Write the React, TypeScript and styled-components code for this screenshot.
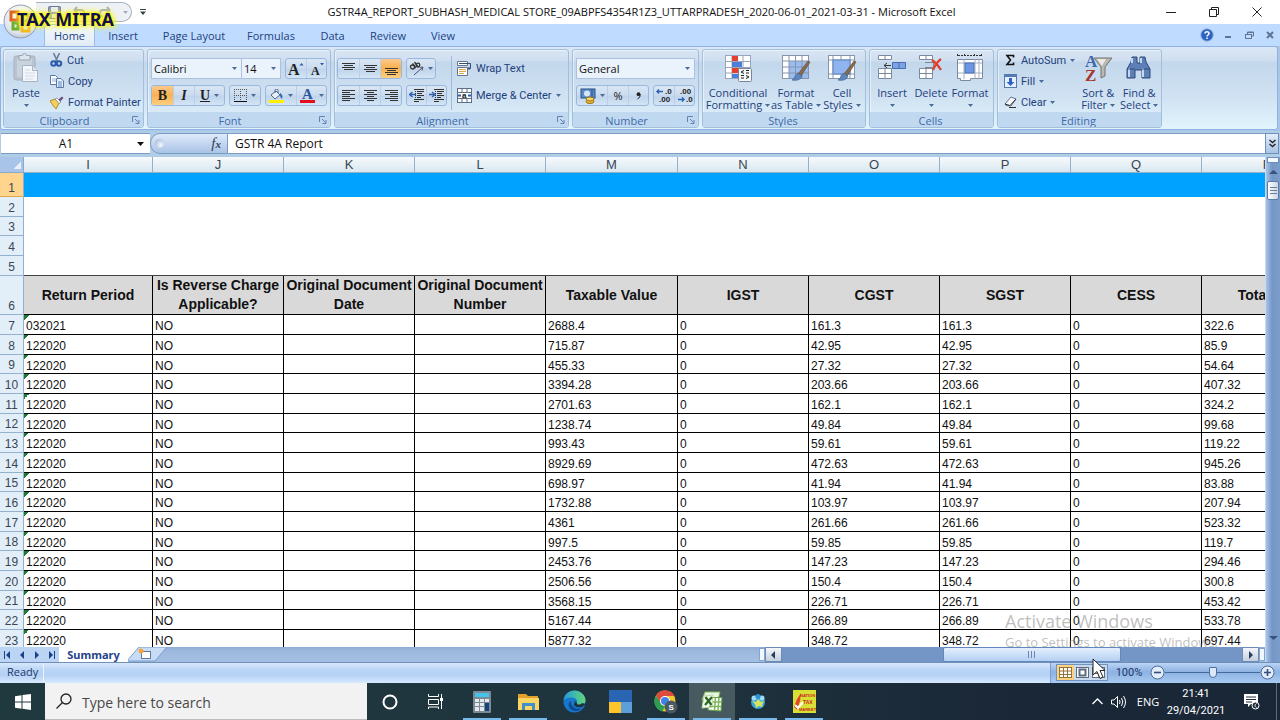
import React from "react";
import styled, { createGlobalStyle } from "styled-components";

const ui = `"Open Sans", "Noto Sans", sans-serif`;
const compact = `Roboto, "Open Sans", sans-serif`;
const sheetFont = `"Liberation Sans", Arial, sans-serif`;

const GlobalStyle = createGlobalStyle`
  * { box-sizing: border-box; }
  body { margin: 0; overflow: hidden; background: #fff; font-family: ${ui}; }
  button, input, select { font: inherit; color: inherit; margin: 0; padding: 0; border: 0; background: none; border-radius: 0; }
  svg { display: block; flex: none; }
`;

const Desktop = styled.div`
  position: relative;
  display: flex;
  flex-direction: column;
  height: 100vh;
  overflow: hidden;
  font-size: 11px;
  color: #1e3f7c;
`;

/* ---------- title bar ---------- */
const TitleBar = styled.header`
  display: flex;
  align-items: center;
  flex: none;
  height: 24px;
  background: #fff;
  color: #111;
`;
const QuickAccess = styled.div`
  display: flex;
  align-items: center;
  gap: 12px;
  width: 96px;
  height: 20px;
  margin-left: 36px;
  padding: 0 8px 0 12px;
  background: #eef1f5;
  border: 1px solid #a9b3c0;
  border-left: 0;
  border-radius: 0 10px 10px 0;
`;
const IconButton = styled.button`
  display: flex;
  align-items: center;
  justify-content: center;
`;
const QuickMore = styled(IconButton)`
  width: 22px;
  height: 20px;
`;
const TitleText = styled.h1`
  flex: 1;
  margin: 0;
  padding-right: 32px;
  text-align: center;
  font-size: 11px;
  font-weight: 400;
  line-height: 24px;
  white-space: nowrap;
`;
const WindowButtons = styled.div`
  display: flex;
  gap: 24px;
  padding-right: 14px;
  button { width: 19px; height: 22px; }
`;
const OfficeButton = styled.button`
  position: absolute;
  left: 3px;
  top: 4px;
  width: 35px;
  height: 35px;
`;
const Brand = styled.div`
  position: absolute;
  left: 15px;
  top: 8px;
  padding: 0 2px;
  font: 700 18px/22px "Noto Sans", sans-serif;
  color: #10104e;
  white-space: nowrap;
  text-shadow: 0 0 2px #ff0, 0 0 3px #ff0, 0 0 4px #fff200, 0 0 6px #fff200, 0 0 8px #fff87a;
`;

/* ---------- ribbon ---------- */
const TabRow = styled.nav`
  display: flex;
  align-items: flex-end;
  flex: none;
  height: 22px;
  padding-left: 44px;
  background: #bfdbff;
`;
const RibbonTab = styled.button<{ $on?: boolean; $w: number }>`
  width: ${(p) => p.$w}px;
  height: 22px;
  line-height: 24px;
  border-radius: 4px 4px 0 0;
  ${(p) => p.$on && "background: linear-gradient(#f2f8ff, #e2ecf6); box-shadow: inset 1px 1px 0 #9cbde3, inset -1px 0 0 #9cbde3;"}
`;
const DocButtons = styled.div`
  display: flex;
  align-items: center;
  gap: 5px;
  height: 22px;
  margin-left: auto;
  padding-right: 2px;
  button { width: 16px; height: 16px; }
`;
const RibbonFrame = styled.div`
  flex: none;
  height: 85px;
  padding-right: 2px;
  background: #a9c6e6;
`;
const Ribbon = styled.div`
  display: flex;
  gap: 3px;
  height: 84px;
  padding: 2px;
  border: 1px solid #8db2e3;
  border-radius: 3px;
  background: linear-gradient(#dbe7f4 0, #cfdef0 14px, #c3d7ec 15px, #d0e2f2 50px, #e2f5fd 83px);
`;
const GroupBox = styled.section<{ $w: number }>`
  display: flex;
  flex-direction: column;
  flex: none;
  width: ${(p) => p.$w}px;
  height: 79px;
  border: 1px solid #a2bfdb;
  border-radius: 3px;
  box-shadow: inset 1px 1px 0 rgba(255, 255, 255, 0.5);
  overflow: hidden;
`;
const GroupBody = styled.div<{ $pad?: string; $gap?: number }>`
  display: flex;
  flex: 1;
  min-height: 0;
  gap: ${(p) => p.$gap ?? 0}px;
  padding: ${(p) => p.$pad ?? "2px 3px 0"};
`;
const GroupLabel = styled.h2`
  display: flex;
  align-items: center;
  flex: none;
  height: 15px;
  margin: 0;
  padding: 1px 2px 0 0;
  background: #c1d9f0;
  color: #3e6aaa;
  font-size: 11px;
  font-weight: 400;
  line-height: 15px;
  span { flex: 1; text-align: center; }
`;
const LaunchButton = styled(IconButton)`
  width: 16px;
  justify-content: flex-end;
`;
const Stack = styled.div<{ $gap: number; $pad?: string }>`
  display: flex;
  flex-direction: column;
  gap: ${(p) => p.$gap}px;
  padding: ${(p) => p.$pad ?? "0"};
`;
const Line = styled.div<{ $gap?: number }>`
  display: flex;
  gap: ${(p) => p.$gap ?? 4}px;
`;
const BigButton = styled.button<{ $w: number }>`
  display: flex;
  flex-direction: column;
  align-items: center;
  flex: none;
  width: ${(p) => p.$w}px;
  padding-top: 2px;
  line-height: 12px;
  white-space: nowrap;
  svg.pic { margin: 1px 0 4px; }
`;
const Words = styled.span`
  display: flex;
  align-items: center;
  justify-content: center;
  gap: 3px;
  height: 12px;
`;
const SmallButton = styled.button`
  display: flex;
  align-items: center;
  gap: 4px;
  height: 20px;
  font-family: ${compact};
  white-space: nowrap;
`;
const ToolSet = styled.div`
  display: flex;
  height: 21px;
  border: 1px solid #9ab8dd;
  border-radius: 3px;
  background: linear-gradient(#d9e6f4, #cbdcef 9px, #bfd4eb 10px, #d3e5f5);
  overflow: hidden;
`;
const Tool = styled.button<{ $w: number; $on?: boolean }>`
  display: flex;
  align-items: center;
  justify-content: center;
  gap: 4px;
  width: ${(p) => p.$w}px;
  height: 19px;
  color: #222;
  ${(p) => p.$on && "background: linear-gradient(#fbc98c, #f9b14f 9px, #fdcf7e);"}
  & + & { border-left: 1px solid #b9cfe8; }
`;
const Glyph = styled.span<{ $i?: boolean; $u?: boolean }>`
  font: ${(p) => (p.$i ? "italic " : "")}700 14px/16px "Liberation Serif", serif;
  text-decoration: ${(p) => (p.$u ? "underline" : "none")};
`;
const PickerBox = styled.span<{ $w: number }>`
  display: flex;
  align-items: center;
  width: ${(p) => p.$w}px;
  height: 21px;
  padding-right: 4px;
  border: 1px solid #abc1de;
  background: #eaf2fb;
  color: #111;
  & + & { border-left: 0; }
  select { flex: 1; min-width: 0; height: 19px; padding-left: 2px; appearance: none; outline: 0; }
`;
const Divider = styled.i`
  width: 1px;
  height: 54px;
  background: #9ebbd9;
`;

/* ---------- formula bar ---------- */
const FormulaBar = styled.div`
  display: flex;
  flex: none;
  height: 26px;
  padding: 2px 1px 3px;
  background: #b0cde8;
  color: #111;
`;
const NameBox = styled.div`
  display: flex;
  align-items: center;
  width: 149px;
  padding-right: 6px;
  background: #fff;
  border-top: 1px solid #7a9cc0;
  border-bottom: 1px solid #7a9cc0;
  input { flex: 1; min-width: 0; padding-right: 6px; text-align: center; font-size: 12px; }
`;
const FxArea = styled.div`
  display: flex;
  align-items: center;
  justify-content: space-between;
  width: 78px;
  padding: 0 6px 0 4px;
  border: 1px solid #7a9cc0;
  border-radius: 10px 0 0 10px;
  background: linear-gradient(#dfeafa, #a9c3e6);
`;
const Knob = styled.i`
  width: 9px;
  height: 9px;
  border-radius: 50%;
  background: radial-gradient(circle at 65% 65%, #f4f8ff, #96aed2);
`;
const FxGlyph = styled.button`
  font: italic 400 15px/16px "Liberation Serif", serif;
  color: #33435c;
  small { font-size: 11px; font-weight: 700; }
`;
const FormulaInput = styled.input`
  && {
    flex: 1;
    min-width: 0;
    padding: 0 7px;
    background: #fff;
    border-top: 1px solid #7a9cc0;
    border-bottom: 1px solid #7a9cc0;
    font-size: 12px;
  }
`;
const ExpandButton = styled(IconButton)`
  && {
    width: 14px;
    border: 1px solid #6f8fb8;
    background: linear-gradient(#e3eefb, #a8c3e6);
  }
`;

/* ---------- sheet ---------- */
const SheetArea = styled.main`
  display: flex;
  flex: 1;
  min-height: 0;
`;
const SheetView = styled.div`
  position: relative;
  flex: 1;
  min-width: 0;
  overflow: hidden;
  background: #fff;
`;
const Sheet = styled.table`
  table-layout: fixed;
  width: 1334px;
  border-spacing: 0;
  font: 12px/14px ${sheetFont};
  color: #111;
  th, td { padding: 0; overflow: hidden; white-space: nowrap; }
`;
const ColumnHead = styled.th`
  height: 16px;
  font-size: 13px;
  line-height: 15px;
  font-weight: 400;
  color: #3b4654;
  background: linear-gradient(#f6fafc, #d9e7ef);
  border-right: 1px solid #93b0cc;
  border-bottom: 1px solid #93b0cc;
`;
const Corner = styled.th`
  background: linear-gradient(135deg, transparent 58%, #e6f1fc 58%) 12px 3px / 9px 9px no-repeat, #a9c4e9;
  border-right: 1px solid #8aa9cd;
  border-bottom: 1px solid #8aa9cd;
`;
const SheetRow = styled.tr<{ $h: number }>`
  height: ${(p) => p.$h}px;
`;
const RowHead = styled.th<{ $on?: boolean }>`
  vertical-align: bottom;
  font-size: 12px;
  line-height: 16px;
  font-weight: 400;
  color: #3b4654;
  background: ${(p) => (p.$on ? "#ffd58d" : "#e2eef8")};
  border-right: 1px solid #93b0cc;
  border-bottom: 1px solid ${(p) => (p.$on ? "#e0a64a" : "#93b0cc")};
`;
const BannerCell = styled.td`
  background: #00a2ff;
`;
const BlankCell = styled.td<{ $last?: boolean }>`
  border-bottom: ${(p) => (p.$last ? "1px solid #444" : "0")};
`;
const FieldHead = styled.th`
  && { white-space: normal; }
  font-size: 14px;
  line-height: 19px;
  font-weight: 700;
  background: #d9d9d9;
  border-right: 1px solid #000;
  border-bottom: 1px solid #000;
`;
const DataCell = styled.td<{ $flag?: boolean }>`
  && { padding: 4px 0 0 2px; }
  vertical-align: top;
  border-right: 1px solid #000;
  border-bottom: 1px solid #000;
  ${(p) => p.$flag && "background: linear-gradient(135deg, #1c7a33 50%, transparent 50%) 0 0 / 5px 5px no-repeat;"}
`;
const Watermark = styled.aside`
  position: absolute;
  right: 24px;
  bottom: -4px;
  width: 236px;
  color: rgba(125, 125, 125, 0.5);
  font-size: 13px;
  line-height: 18px;
  white-space: nowrap;
  strong { display: block; font-size: 18px; line-height: 24px; font-weight: 400; }
`;
const VScroll = styled.div`
  display: flex;
  flex-direction: column;
  align-items: center;
  width: 15px;
  background: linear-gradient(90deg, #a9c4e6, #7497c6 6px, #7c9dca);
  border-left: 1px solid #c5dbf2;
`;
const VSplit = styled.i`
  width: 12px;
  height: 6px;
  background: #f4f9ff;
  border: 1px solid #6b8db8;
`;
const VThumb = styled.i`
  display: flex;
  align-items: center;
  justify-content: center;
  width: 12px;
  height: 19px;
  background: linear-gradient(90deg, #fff, #c9d6e6);
  border: 1px solid #5b7ba6;
  border-radius: 2px;
`;
const ArrowUp = styled(IconButton)` height: 18px; `;
const ArrowDown = styled(IconButton)` margin-top: auto; height: 18px; `;

/* ---------- sheet tabs and horizontal scroll ---------- */
const BottomStrip = styled.div`
  display: flex;
  flex: none;
  height: 16px;
  background: linear-gradient(#8facd6, #9db9de 4px, #a3bfe2);
  border-bottom: 1px solid #6f8fb8;
`;
const SheetNav = styled.div`
  display: flex;
  justify-content: space-around;
  align-items: center;
  width: 59px;
  background: #bcd4f3;
`;
const SheetTab = styled.button`
  width: 69px;
  background: #fff;
  color: #1e4489;
  font: 700 11px/14px "Noto Sans", sans-serif;
`;
const NewSheet = styled.button`
  width: 40px;
  height: 15px;
`;
const HScroll = styled.div`
  display: flex;
  width: 521px;
  margin-left: auto;
`;
const HSplit = styled.i`
  width: 6px;
  margin: 1px 0;
  background: #f1f7ff;
  border: 1px solid #86a4cc;
`;
const HButton = styled(IconButton)`
  && {
    width: 17px;
    background: linear-gradient(#f4f6fa, #c4cfdf);
    border: 1px solid #6b8ab5;
  }
`;
const HTrack = styled.div`
  display: flex;
  flex: 1;
  background: #7396c6;
`;
const HThumb = styled.i`
  display: flex;
  align-items: center;
  justify-content: center;
  width: 178px;
  margin-left: 161px;
  background: linear-gradient(#e4effd, #b5d0f3);
  border: 1px solid #6187bc;
  border-radius: 2px;
`;

/* ---------- status bar ---------- */
const StatusBar = styled.footer`
  display: flex;
  flex: none;
  height: 20px;
  background: linear-gradient(#d8e8fc, #b9d5f6 7px, #b4d1f4 12px, #d7e9fe);
  color: #1d3668;
`;
const Ready = styled.div`
  width: 44px;
  padding-left: 7px;
  line-height: 18px;
  border-right: 1px solid #e9f3ff;
`;
const StatusTools = styled.div`
  display: flex;
  align-items: center;
  width: 230px;
  margin-left: auto;
  padding: 0 5px 1px;
  border-left: 1px solid #7c9fce;
  background: linear-gradient(#bad4f4, #8db2e2 9px, #a9cbf2);
`;
const ViewButtons = styled.div`
  display: flex;
  width: 52px;
  height: 17px;
  border: 1px solid #7391bd;
  background: #c8d9ee;
`;
const ViewButton = styled(IconButton)<{ $on?: boolean }>`
  && {
    flex: 1;
    background: ${(p) => (p.$on ? "#fdd27f" : "transparent")};
  }
`;
const ZoomLabel = styled.span`
  width: 42px;
  text-align: center;
  font-family: ${compact};
`;
const Slider = styled.input`
  flex: 1;
  min-width: 0;
  height: 16px;
  appearance: none;
  background: linear-gradient(#456a9f, #456a9f) center / 100% 1px no-repeat !important;
  &::-webkit-slider-thumb {
    appearance: none;
    width: 8px;
    height: 11px;
    background: #dbe8f8;
    border: 1px solid #4f6f9e;
    border-radius: 1px 1px 4px 4px;
  }
`;

/* ---------- taskbar ---------- */
const Taskbar = styled.div`
  display: flex;
  flex: none;
  height: 37px;
  background: linear-gradient(90deg, #20393f, #1f343e 50%, #1a2737 80%);
  color: #fff;
`;
const Start = styled(IconButton)` width: 45px; `;
const SearchBox = styled.label`
  display: flex;
  align-items: center;
  gap: 10px;
  width: 322px;
  padding-left: 11px;
  background: #f2f2f2;
  border-bottom: 1px solid #b9bdbe;
  color: #444;
  input { flex: 1; min-width: 0; padding-top: 2px; font-size: 14px; outline: 0; }
  input::placeholder { color: #484848; opacity: 1; }
`;
const AppButton = styled(IconButton)<{ $run?: boolean; $on?: boolean }>`
  && {
    width: 46px;
    background:
      ${(p) => (p.$run ? "linear-gradient(#76b9ed, #76b9ed) center bottom / 38px 2px no-repeat," : "")}
      ${(p) => (p.$on ? "linear-gradient(#465a60, #465a60)" : "linear-gradient(transparent, transparent)")};
  }
`;
const Tray = styled.div`
  display: flex;
  align-items: center;
  margin-left: auto;
  border-right: 1px solid #5f6b76;
  margin-right: 3px;
`;
const Clock = styled.div`
  width: 60px;
  text-align: center;
  font-family: ${compact};
  font-size: 11px;
  line-height: 17px;
`;
const Lang = styled.span`
  width: 36px;
  text-align: center;
`;
const TrayButton = styled(IconButton)<{ $w: number }>`
  width: ${(p) => p.$w}px;
  height: 37px;
`;
const Pointer = styled.svg`
  position: absolute;
  left: 1092px;
  top: 658px;
`;

/* ---------- icons ---------- */
const Caret = ({ c = "#4a6a98" }: { c?: string }) => (
  <svg width="5" height="3" viewBox="0 0 5 3"><path d="M0 0h5L2.500 3z" fill={c} /></svg>
);
const Launcher = () => (
  <svg width="9" height="9" viewBox="0 0 9 9" fill="none" stroke="#5f82b4"><path d="M.5 6V.5H6M3 3l3.500 3.500M7 4v3.500H3.500" /></svg>
);
const PasteIcon = () => (
  <svg className="pic" width="26" height="30" viewBox="0 0 26 30">
    <rect x="1" y="3" width="21" height="24" rx="2" fill="#b9c4d1" stroke="#a4b1c1" />
    <rect x="4" y="6" width="15" height="18" fill="#c9d3de" />
    <path d="M6 2.500h3.500a2 2 0 0 1 4 0H17V7H6z" fill="#dde4ec" stroke="#98a6b8" />
    <path d="M9.500 12.500h10l5 5v11h-15z" fill="#f3f6fa" stroke="#a8b4c4" />
    <path d="M19.500 12.500v5h5" fill="#dfe6ee" stroke="#a8b4c4" />
    <path d="M12 17h5M12 20h10M12 23h10M12 26h8" stroke="#d0d9e4" />
  </svg>
);
const CutIcon = () => (
  <svg width="13" height="14" viewBox="0 0 13 14" fill="none">
    <path d="M3.500 0l4 8.500M9.500 0L5.500 8.500" stroke="#6b7d96" strokeWidth="1.600" />
    <circle cx="3.500" cy="10.500" r="2.200" stroke="#2a5cab" strokeWidth="2" /><circle cx="9" cy="10.500" r="2.200" stroke="#2a5cab" strokeWidth="2" />
  </svg>
);
const CopyIcon = () => (
  <svg width="14" height="13" viewBox="0 0 14 13" stroke="#5978a8">
    <path d="M.5.500h5l2 2v7h-7z" fill="#fff" /><path d="M2 4h4M2 6h4" stroke="#8fabd4" />
    <path d="M6.500 3.500h4.500l2.500 2.500v6.500h-7z" fill="#e6effc" /><path d="M8 7h4M8 9h4M8 11h4" stroke="#5b86c4" />
  </svg>
);
const PainterIcon = () => (
  <svg width="14" height="13" viewBox="0 0 14 13">
    <path d="M0 5l5-2 4 4-3 6C4 11 2 8 0 5z" fill="#f4cf5a" stroke="#b58a25" />
    <path d="M5 3l2-1 4 4-2 1.500z" fill="#fff" stroke="#777" strokeWidth=".7" />
    <path d="M8.500 3.500L12 .5l1.500 1.500-3.500 3.500z" fill="#6a4a86" />
  </svg>
);
const Bars = ({ rows, y = 0 }: { rows: number[][]; y?: number }) => (
  <svg width="13" height="14" viewBox="0 0 13 14" stroke="#333">
    {rows.map(([x, w], i) => <path key={i} d={`M${x} ${y + i * 2 + 0.5}h${w}`} strokeWidth="1" />)}
  </svg>
);
const wide = [[0, 13], [2, 9], [0, 13], [2, 9]];
const IndentIcon = ({ flip = false }: { flip?: boolean }) => (
  <svg width="15" height="13" viewBox="0 0 15 13" stroke="#333" fill="none">
    <path d="M5 .5h10M8 2.500h7M8 4.500h5M8 6.500h7M8 8.500h4M5 10.500h10M5 12.500h5" />
    <path d={flip ? "M0 5.500h5M3 3l3 2.500L3 8" : "M7 5.500H1M3.500 3L.5 5.500 3.500 8"} stroke="#2d62b4" strokeWidth="1.300" />
    <path d="M6.500 0v13" strokeDasharray="1 1" />
  </svg>
);
const OrientIcon = () => (
  <svg width="15" height="15" viewBox="0 0 15 15" fill="none" stroke="#333">
    <circle cx="3.500" cy="6" r="2" strokeWidth="1.300" /><path d="M3.500 2.500l3.500 4.500" strokeWidth="1.300" />
    <path d="M5.500 1l4 5.500" strokeWidth="1.300" /><circle cx="9" cy="4" r="1.800" strokeWidth="1.300" />
    <path d="M5 14L13.500 6.500M14 6l-3.500.5M14 6l-1 3.500" stroke="#556" />
  </svg>
);
const WrapIcon = () => (
  <svg width="15" height="15" viewBox="0 0 15 15" fill="none">
    <path d="M.5.500h10v4H.5zM.5 6.500h10v8H.5z" fill="#fff" stroke="#66788f" />
    <path d="M2 2.500h11.500v5H11M12.500 6L11 7.500 12.500 9" stroke="#3a4f6e" /><path d="M2 8.500h7M2 10.500h7M2 12.500h5" stroke="#e1a944" />
  </svg>
);
const MergeIcon = () => (
  <svg width="15" height="15" viewBox="0 0 15 15" fill="none">
    <rect x=".5" y=".5" width="14" height="14" fill="#fff" stroke="#5d6f8a" />
    <path d="M.5 4.500h14M.5 10.500h14M5 0v4M10 0v4M5 11v4M10 11v4" stroke="#5d6f8a" />
    <path d="M1 7.500h3M14 7.500h-3" stroke="#2b5db0" strokeWidth="2" />
    <text x="5" y="10" fontFamily="Liberation Sans" fontWeight="700" fontSize="8" fill="#111">a</text>
  </svg>
);
const BorderIcon = () => (
  <svg width="13" height="13" viewBox="0 0 13 13" stroke="#555" fill="none">
    <path d="M.5 0v12M6.500 0v12M12.500 0v12M0 .5h13M0 6.500h13" strokeDasharray="1 1" /><path d="M0 12.500h13" stroke="#111" />
  </svg>
);
const FillIcon = () => (
  <svg width="15" height="14" viewBox="0 0 15 14">
    <path d="M2 6l5-4 4 4-5 4z" fill="#e9eff7" stroke="#50678d" /><path d="M6 4V1.500a1.500 1.500 0 0 1 3 0V4" fill="none" stroke="#50678d" />
    <path d="M11 4c2 1 3 3 2 6-1-1-2-2-2-4z" fill="#2e63b8" /><rect y="11" width="15" height="3" fill="#ffef00" />
  </svg>
);
const FontColorIcon = () => (
  <svg width="15" height="15" viewBox="0 0 15 15">
    <text x="2" y="11" fontFamily="Liberation Serif" fontWeight="700" fontSize="15" fill="#2f57a0">A</text><rect y="12" width="15" height="3" fill="#e3101c" />
  </svg>
);
const GrowIcon = ({ down = false }: { down?: boolean }) => (
  <svg width="16" height="16" viewBox="0 0 16 16">
    <text x={down ? 2 : 0} y="14" fontFamily="Liberation Serif" fontWeight="700" fontSize={down ? 12 : 16} fill="#222">A</text>
    <path d={down ? "M11 2h4l-2 2.500z" : "M11.500 4.500h4l-2-2.500z"} fill="#2e5ba8" />
  </svg>
);
const MoneyIcon = () => (
  <svg width="16" height="16" viewBox="0 0 16 16">
    <rect x="1" y="1" width="14" height="9" fill="#5b8cc9" stroke="#294f88" /><circle cx="7" cy="5.500" r="3" fill="#d5e5f6" />
    <path d="M12 1v8" stroke="#294f88" /><ellipse cx="10" cy="13.500" rx="4" ry="2" fill="#eebd3d" stroke="#9b7315" /><ellipse cx="10" cy="11" rx="4" ry="2" fill="#f7d365" stroke="#9b7315" />
  </svg>
);
const DecimalIcon = ({ dec = false }: { dec?: boolean }) => (
  <svg width="16" height="15" viewBox="0 0 16 15" fontFamily="Liberation Sans" fontSize="8" fontWeight="700">
    <text x={dec ? 3 : 9} y="6" fill="#222">{dec ? ".00" : ".0"}</text><text x={dec ? 9 : 3} y="14" fill="#222">{dec ? ".0" : ".00"}</text>
    <path d={dec ? "M1 11.500h6M5 9.500l2 2-2 2" : "M7 3.500H1M3 1.500l-2 2 2 2"} fill="none" stroke="#2e62b5" strokeWidth="1.500" />
  </svg>
);
const Brush = () => (
  <g><path d="M27 8l2 1-9 14-3-2z" fill="#8a6a4c" stroke="#5b4634" strokeWidth=".6" /><path d="M17 20l4 3c-1 4-6 5-10 4 3-1 3-6 6-7z" fill="#5f86bb" stroke="#385b8c" strokeWidth=".6" /></g>
);
const CondIcon = () => (
  <svg className="pic" width="30" height="30" viewBox="0 0 30 30">
    <rect x="2.500" y="2.500" width="25" height="23" fill="#fff" stroke="#9aa7ba" />
    <path d="M9 3v22M20 3v22M3 8.500h24M3 14.500h24M3 20h24" stroke="#9aa7ba" />
    <rect x="9" y="3" width="6" height="5" fill="#e5402f" /><rect x="9" y="9" width="10" height="5" fill="#4d7fd8" /><rect x="9" y="15" width="9" height="5" fill="#e5402f" /><rect x="9" y="21" width="6" height="4" fill="#4d7fd8" />
    <rect x="15.500" y="15.500" width="13" height="13" rx="1" fill="#f6f7f9" stroke="#7a8698" />
    <path d="M21 17.500l-3 1.500 3 1.500M18 22.500h3M18 25h3M23 17.500h3M23 20h3M23 22.500l3 1.500-3 1.500" stroke="#222" fill="none" />
  </svg>
);
const TableIcon = () => (
  <svg className="pic" width="30" height="30" viewBox="0 0 30 30">
    <rect x="1.500" y="2.500" width="26" height="23" fill="#fff" stroke="#8795ab" /><rect x="8" y="8" width="19" height="17" fill="#9bbcf0" />
    <path d="M8 3v22M14.500 3v22M21 3v22M2 8h25M2 14h25M2 20h25" stroke="#8795ab" /><Brush />
  </svg>
);
const StyleIcon = () => (
  <svg className="pic" width="30" height="30" viewBox="0 0 30 30">
    <rect x="1.500" y="2.500" width="26" height="23" fill="#fff" stroke="#8795ab" /><path d="M6 3v22M23 3v22M2 7h25M2 21h25M14 3v4M14 21v4" stroke="#8795ab" />
    <rect x="6" y="7" width="17" height="14" fill="#8fb4ef" stroke="#5d82c0" /><Brush />
  </svg>
);
const InsertIcon = () => (
  <svg className="pic" width="30" height="30" viewBox="0 0 30 30" stroke="#7c8aa0">
    <path d="M1.500 2.500h13v4h-13zM8 2.500v4M1.500 15.500h13v10h-13zM8 15.500v10M1.500 20.500h13" fill="#fff" />
    <path d="M15.500 9.500h13v6h-13zM22 9.500v6" fill="#7ba3e6" stroke="#4a6db0" /><path d="M14 12.500H7.500M10 10l-3 2.500 3 2.500" fill="none" stroke="#333" />
  </svg>
);
const DeleteIcon = () => (
  <svg className="pic" width="30" height="30" viewBox="0 0 30 30" stroke="#7c8aa0">
    <path d="M3.500 2.500h13v4h-13zM10 2.500v4M3.500 15.500h13v10h-13zM10 15.500v10M3.500 20.500h13" fill="#fff" />
    <path d="M9.500 9.500h8v5h-8" fill="none" stroke="#333" strokeDasharray="1 1" /><path d="M16 7c3 2 6 5 9 10M25 6c-4 3-6 6-8 11" stroke="#e0402c" strokeWidth="2.200" fill="none" />
  </svg>
);
const FormatIcon = () => (
  <svg className="pic" width="30" height="30" viewBox="0 0 30 30" stroke="#7c8aa0">
    <path d="M2.500 6.500h25v19h-12v2h-10v-2h-3z" fill="#fff" /><path d="M9 6v20M20 6v20M3 10h24M3 20h24M24 6v20" stroke="#a3afc2" />
    <rect x="10" y="10" width="9" height="10" fill="#6a96e4" stroke="#4a6db0" /><path d="M2.500 1v3M9.500 1v3M19.500 1v3M26.500 1v3M3 2.500h24" stroke="#333" strokeDasharray="2 1" />
  </svg>
);
const SortIcon = () => (
  <svg className="pic" width="30" height="30" viewBox="0 0 30 30">
    <path d="M11 5h18l-7 9v9l-4 2V14z" fill="#b9b7b1" stroke="#77756f" /><path d="M14 6h9l-4 7z" fill="#eceae5" />
    <text x="2" y="14" fontFamily="Liberation Serif" fontWeight="700" fontSize="17" fill="#3d68ad">A</text>
    <text x="2" y="28" fontFamily="Liberation Serif" fontWeight="700" fontSize="17" fill="#a8362f">Z</text>
  </svg>
);
const FindIcon = () => (
  <svg className="pic" width="30" height="30" viewBox="0 0 30 30" stroke="#2e4877">
    <path d="M8 4h5v6h3V4h5l1 5 4 7v9h-8v-8h-7v8H3v-9l4-7z" fill="#5c7fb7" />
    <path d="M5 15v9M8 5v5M19 15v9M17 5v5" stroke="#c4d6f0" strokeWidth="2" /><path d="M3 16h8M18 16h8" />
  </svg>
);
const SigmaIcon = () => (
  <svg width="13" height="14" viewBox="0 0 13 14"><path d="M9.500 4.500V2.500H3l3.500 4.500L3 11.500h6.500v-2" fill="none" stroke="#111" strokeWidth="1.600" /></svg>
);
const FillDownIcon = () => (
  <svg width="13" height="14" viewBox="0 0 13 14"><rect x=".5" y=".5" width="12" height="13" fill="#e6f0fd" stroke="#5579b1" /><path d="M1 2h11" stroke="#5579b1" strokeWidth="2" /><path d="M5 4h3v4h2.500l-4 4-4-4H5z" fill="#2e63c4" /></svg>
);
const EraserIcon = () => (
  <svg width="13" height="12" viewBox="0 0 13 12"><path d="M1 8l6-7 5 2-5 7-5-.5z" fill="#f6f8fb" stroke="#62718a" /><path d="M1 8l5 1.500L12 3M5 11.500h7" fill="none" stroke="#333" /></svg>
);
const OfficeLogo = () => (
  <svg width="35" height="35" viewBox="0 0 35 35">
    <defs><radialGradient id="orb" cx=".5" cy=".3" r=".8"><stop offset="0" stopColor="#fff" /><stop offset=".7" stopColor="#dfe5ee" /><stop offset="1" stopColor="#a2adbd" /></radialGradient></defs>
    <circle cx="17.500" cy="17.500" r="16.500" fill="url(#orb)" stroke="#8f9db2" />
    <g fill="none" strokeWidth="3"><path d="M15 8H8v8h7z" stroke="#e2601c" /><path d="M19 11h6v6h-6z" stroke="#3b7fd0" /><path d="M10 19h5v6h-5z" stroke="#6cae2c" /><path d="M19 20h7v7h-7z" stroke="#f2b81d" /></g>
  </svg>
);
const ViewIcon = ({ kind }: { kind: number }) => (
  <svg width="13" height="11" viewBox="0 0 13 11" fill="none" stroke={kind ? "#5d6c80" : "#927236"}>
    <rect x=".5" y=".5" width="12" height="10" fill="#fff" />
    {kind === 0 && <path d="M0 4h13M0 7.500h13M4.500 0v11M8.500 0v11" />}
    {kind === 1 && <path d="M3.500 2.500h6v6h-6z" strokeWidth="2" />}
    {kind === 2 && <path d="M0 6.500h7V0M7 6v5" />}
  </svg>
);
const ZoomGlyph = ({ plus = false }: { plus?: boolean }) => (
  <svg width="15" height="15" viewBox="0 0 15 15"><circle cx="7.500" cy="7.500" r="6.500" fill="#e3edf9" stroke="#4c6c9c" /><path d={plus ? "M4 7.500h7M7.500 4v7" : "M4 7.500h7"} stroke="#334f7c" strokeWidth="1.600" /></svg>
);
const Tri = ({ d, c = "#17428a" }: { d: string; c?: string }) => <svg width="9" height="8" viewBox="0 0 9 8"><path d={d} fill={c} /></svg>;

/* ---------- pieces ---------- */
const Group = ({ title, w, launch, pad, gap, children }: { title: string; w: number; launch?: boolean; pad?: string; gap?: number; children: React.ReactNode }) => (
  <GroupBox $w={w}>
    <GroupBody $pad={pad} $gap={gap}>{children}</GroupBody>
    <GroupLabel><span>{title}</span>{launch && <LaunchButton aria-label={`${title} options`}><Launcher /></LaunchButton>}</GroupLabel>
  </GroupBox>
);
const Big = ({ icon, w, a, b }: { icon: React.ReactNode; w: number; a: string; b?: string }) => (
  <BigButton $w={w}>{icon}<Words>{a}</Words><Words>{b}<Caret /></Words></BigButton>
);

const columns = ["I", "J", "K", "L", "M", "N", "O", "P", "Q", "R"];
const widths = [129, 131, 131, 131, 132, 131, 131, 131, 131, 132];
const fields = ["Return Period", "Is Reverse Charge Applicable?", "Original Document Date", "Original Document Number", "Taxable Value", "IGST", "CGST", "SGST", "CESS", "Total Tax"];
const records: [string, string, string, string][] = [
  ["032021", "2688.4", "161.3", "322.6"], ["122020", "715.87", "42.95", "85.9"], ["122020", "455.33", "27.32", "54.64"],
  ["122020", "3394.28", "203.66", "407.32"], ["122020", "2701.63", "162.1", "324.2"], ["122020", "1238.74", "49.84", "99.68"],
  ["122020", "993.43", "59.61", "119.22"], ["122020", "8929.69", "472.63", "945.26"], ["122020", "698.97", "41.94", "83.88"],
  ["122020", "1732.88", "103.97", "207.94"], ["122020", "4361", "261.66", "523.32"], ["122020", "997.5", "59.85", "119.7"],
  ["122020", "2453.76", "147.23", "294.46"], ["122020", "2506.56", "150.4", "300.8"], ["122020", "3568.15", "226.71", "453.42"],
  ["122020", "5167.44", "266.89", "533.78"], ["122020", "5877.32", "348.72", "697.44"],
];

export default function App() {
  return (
    <Desktop>
      <GlobalStyle />
      <TitleBar>
        <QuickAccess>
          <IconButton aria-label="Save"><svg width="13" height="13" viewBox="0 0 13 13"><rect x=".5" y=".5" width="12" height="12" rx="1" fill="#8d97b8" stroke="#6a7599" /><path d="M3 1h7v5H3zM4 8h5v4H4z" fill="#e9edf5" /></svg></IconButton>
          <IconButton aria-label="Undo"><svg width="13" height="12" viewBox="0 0 13 12" fill="none" stroke="#a5adb8" strokeWidth="2"><path d="M4 1L1.500 4 4 7M2 4h6c4 0 4 6 0 6.500" /></svg></IconButton>
          <IconButton aria-label="Redo"><svg width="13" height="12" viewBox="0 0 13 12" fill="none" stroke="#a5adb8" strokeWidth="2"><path d="M9 1l2.500 3L9 7M11 4H5c-4 0-4 6 0 6.500" /></svg></IconButton>
          <Caret c="#a5adb8" />
        </QuickAccess>
        <QuickMore aria-label="Customize"><svg width="6" height="6" viewBox="0 0 6 6"><path d="M0 .5h6" stroke="#344" /><path d="M0 2.500h6L3 6z" fill="#344" /></svg></QuickMore>
        <TitleText>GSTR4A_REPORT_SUBHASH_MEDICAL STORE_09ABPFS4354R1Z3_UTTARPRADESH_2020-06-01_2021-03-31 - Microsoft Excel</TitleText>
        <WindowButtons>
          <IconButton aria-label="Minimize"><svg width="10" height="10" stroke="#222"><path d="M0 5.500h10" /></svg></IconButton>
          <IconButton aria-label="Restore"><svg width="10" height="10" stroke="#222" fill="none"><path d="M.5 2.500h7v7h-7zM2.500 2V.5h7v7H8" /></svg></IconButton>
          <IconButton aria-label="Close"><svg width="10" height="10" stroke="#222"><path d="M.5.500l9 9M9.500.500l-9 9" /></svg></IconButton>
        </WindowButtons>
      </TitleBar>

      <TabRow>
        <RibbonTab $on $w={51}>Home</RibbonTab>
        <RibbonTab $w={56}>Insert</RibbonTab>
        <RibbonTab $w={86}>Page Layout</RibbonTab>
        <RibbonTab $w={68}>Formulas</RibbonTab>
        <RibbonTab $w={55}>Data</RibbonTab>
        <RibbonTab $w={56}>Review</RibbonTab>
        <RibbonTab $w={54}>View</RibbonTab>
        <DocButtons>
          <IconButton aria-label="Help"><svg width="14" height="14" viewBox="0 0 14 14"><circle cx="7" cy="7" r="6.200" fill="#2e62c0" stroke="#8fb0e0" /><path d="M5 5.500c0-2.500 4-2.500 4 0 0 1.500-2 1.500-2 3M7 9.500v1.500" stroke="#fff" strokeWidth="1.500" fill="none" /></svg></IconButton>
          <IconButton aria-label="Minimize workbook"><svg width="8" height="8" stroke="#5f7493" strokeWidth="2"><path d="M1 6h6" /></svg></IconButton>
          <IconButton aria-label="Restore workbook"><svg width="9" height="8" stroke="#5f7493" fill="none"><path d="M.5 3.500h6v4h-6zM2.500 3V1h6v4H7" /><path d="M2 1.500h7M0 3.500h7" /></svg></IconButton>
          <IconButton aria-label="Close workbook"><svg width="8" height="8" stroke="#5f7493" strokeWidth="2"><path d="M1 1l6 6M7 1L1 7" /></svg></IconButton>
        </DocButtons>
      </TabRow>

      <RibbonFrame>
        <Ribbon>
          <Group title="Clipboard" w={141} launch pad="0 0 0 3px" gap={5}>
            <Big icon={<PasteIcon />} w={38} a="Paste" />
            <Stack $gap={1}>
              <SmallButton><CutIcon />Cut</SmallButton>
              <SmallButton><CopyIcon />Copy</SmallButton>
              <SmallButton><PainterIcon />Format Painter</SmallButton>
            </Stack>
          </Group>

          <Group title="Font" w={184} launch>
            <Stack $gap={6} $pad="6px 0 0">
              <Line>
                <Line $gap={0}>
                  <PickerBox $w={91}><select aria-label="Font"><option>Calibri</option></select><Caret /></PickerBox>
                  <PickerBox $w={39}><select aria-label="Font size"><option>14</option></select><Caret /></PickerBox>
                </Line>
                <ToolSet>
                  <Tool $w={20} aria-label="Grow font"><GrowIcon /></Tool>
                  <Tool $w={20} aria-label="Shrink font"><GrowIcon down /></Tool>
                </ToolSet>
              </Line>
              <Line>
                <ToolSet>
                  <Tool $w={21} $on><Glyph>B</Glyph></Tool>
                  <Tool $w={21}><Glyph $i>I</Glyph></Tool>
                  <Tool $w={30}><Glyph $u>U</Glyph><Caret /></Tool>
                </ToolSet>
                <ToolSet><Tool $w={30} aria-label="Borders"><BorderIcon /><Caret /></Tool></ToolSet>
                <ToolSet>
                  <Tool $w={30} aria-label="Fill colour"><FillIcon /><Caret /></Tool>
                  <Tool $w={30} aria-label="Font colour"><FontColorIcon /><Caret /></Tool>
                </ToolSet>
              </Line>
            </Stack>
          </Group>

          <Group title="Alignment" w={235} launch gap={4} pad="2px 2px 0">
            <Stack $gap={6} $pad="6px 0 0">
              <Line>
                <ToolSet>
                  <Tool $w={21} aria-label="Top"><Bars rows={wide} y={1} /></Tool>
                  <Tool $w={21} aria-label="Middle"><Bars rows={wide} y={3} /></Tool>
                  <Tool $w={21} $on aria-label="Bottom"><Bars rows={wide} y={6} /></Tool>
                </ToolSet>
                <ToolSet><Tool $w={28} aria-label="Orientation"><OrientIcon /><Caret /></Tool></ToolSet>
              </Line>
              <Line>
                <ToolSet>
                  <Tool $w={21} aria-label="Left"><Bars y={1} rows={[[0, 13], [0, 8], [0, 13], [0, 8], [0, 13], [0, 8]]} /></Tool>
                  <Tool $w={21} aria-label="Centre"><Bars y={1} rows={[[0, 13], [3, 7], [0, 13], [3, 7], [0, 13], [3, 7]]} /></Tool>
                  <Tool $w={21} aria-label="Right"><Bars y={1} rows={[[0, 13], [5, 8], [0, 13], [5, 8], [0, 13], [5, 8]]} /></Tool>
                </ToolSet>
                <ToolSet>
                  <Tool $w={19} aria-label="Decrease indent"><IndentIcon /></Tool>
                  <Tool $w={20} aria-label="Increase indent"><IndentIcon flip /></Tool>
                </ToolSet>
              </Line>
            </Stack>
            <Line $gap={5}>
              <Stack $gap={0} $pad="4px 0 0"><Divider /></Stack>
              <Stack $gap={7} $pad="6px 0 0">
                <SmallButton><WrapIcon />Wrap Text</SmallButton>
                <SmallButton><MergeIcon />Merge &amp; Center<Caret /></SmallButton>
              </Stack>
            </Line>
          </Group>

          <Group title="Number" w={127} launch>
            <Stack $gap={6} $pad="6px 0 0">
              <PickerBox $w={119}><select aria-label="Number format"><option>General</option></select><Caret /></PickerBox>
              <Line>
                <ToolSet>
                  <Tool $w={30} aria-label="Currency"><MoneyIcon /><Caret /></Tool>
                  <Tool $w={21}>%</Tool>
                  <Tool $w={20} aria-label="Comma style"><svg width="5" height="8" viewBox="0 0 5 8"><circle cx="2.500" cy="2.200" r="1.900" fill="#222" /><path d="M4 2c.5 2-.5 4-2.500 5" stroke="#222" fill="none" /></svg></Tool>
                </ToolSet>
                <ToolSet>
                  <Tool $w={20} aria-label="Increase decimal"><DecimalIcon /></Tool>
                  <Tool $w={20} aria-label="Decrease decimal"><DecimalIcon dec /></Tool>
                </ToolSet>
              </Line>
            </Stack>
          </Group>

          <Group title="Styles" w={164} gap={1} pad="0 3px">
            <Big icon={<CondIcon />} w={64} a="Conditional" b="Formatting" />
            <Big icon={<TableIcon />} w={50} a="Format" b="as Table" />
            <Big icon={<StyleIcon />} w={40} a="Cell" b="Styles" />
          </Group>

          <Group title="Cells" w={125} pad="0 3px">
            <Big icon={<InsertIcon />} w={38} a="Insert" />
            <Big icon={<DeleteIcon />} w={40} a="Delete" />
            <Big icon={<FormatIcon />} w={38} a="Format" />
          </Group>

          <Group title="Editing" w={165} pad="0 4px 0 6px">
            <Stack $gap={1}>
              <SmallButton><SigmaIcon />AutoSum<Caret /></SmallButton>
              <SmallButton><FillDownIcon />Fill<Caret /></SmallButton>
              <SmallButton><EraserIcon />Clear<Caret /></SmallButton>
            </Stack>
            <Line $gap={1}>
              <Stack $gap={0} $pad="0 0 0 3px"><Big icon={<SortIcon />} w={40} a="Sort &" b="Filter" /></Stack>
              <Big icon={<FindIcon />} w={40} a="Find &" b="Select" />
            </Line>
          </Group>
        </Ribbon>
      </RibbonFrame>

      <FormulaBar>
        <NameBox><input aria-label="Name box" defaultValue="A1" /><svg width="7" height="4" viewBox="0 0 7 4"><path d="M0 0h7L3.500 4z" fill="#111" /></svg></NameBox>
        <FxArea><Knob /><FxGlyph aria-label="Insert function">f<small>x</small></FxGlyph></FxArea>
        <FormulaInput aria-label="Formula" defaultValue="GSTR 4A Report" />
        <ExpandButton aria-label="Expand"><svg width="7" height="9" viewBox="0 0 7 9" fill="none" stroke="#222" strokeWidth="1.400"><path d="M.5 1l3 2.500 3-2.500M.5 5l3 2.500 3-2.500" /></svg></ExpandButton>
      </FormulaBar>

      <SheetArea>
        <SheetView>
          <Sheet>
            <colgroup><col style={{ width: 24 }} />{widths.map((w, i) => <col key={i} style={{ width: w }} />)}</colgroup>
            <thead><SheetRow $h={16}><Corner />{columns.map((c) => <ColumnHead key={c}>{c}</ColumnHead>)}</SheetRow></thead>
            <tbody>
              <SheetRow $h={24}><RowHead $on>1</RowHead><BannerCell colSpan={10} /></SheetRow>
              {[20, 19, 20, 20].map((h, i) => (
                <SheetRow key={i} $h={h}><RowHead>{i + 2}</RowHead><BlankCell colSpan={10} $last={i === 3} /></SheetRow>
              ))}
              <SheetRow $h={39}><RowHead>6</RowHead>{fields.map((f) => <FieldHead key={f}>{f}</FieldHead>)}</SheetRow>
              {records.map((r, i) => (
                <SheetRow key={i} $h={i % 3 === 2 ? 19 : 20}>
                  <RowHead>{i + 7}</RowHead>
                  <DataCell $flag>{r[0]}</DataCell>
                  <DataCell>NO</DataCell><DataCell /><DataCell />
                  <DataCell>{r[1]}</DataCell><DataCell>0</DataCell>
                  <DataCell>{r[2]}</DataCell><DataCell>{r[2]}</DataCell>
                  <DataCell>0</DataCell><DataCell>{r[3]}</DataCell>
                </SheetRow>
              ))}
            </tbody>
          </Sheet>
          <Watermark><strong>Activate Windows</strong>Go to Settings to activate Windows.</Watermark>
        </SheetView>
        <VScroll>
          <VSplit />
          <ArrowUp aria-label="Scroll up"><Tri d="M0 6h9L4.500 2z" c="#35547f" /></ArrowUp>
          <VThumb><svg width="7" height="8" stroke="#6c7c92"><path d="M0 .5h7M0 3.500h7M0 6.500h7" /></svg></VThumb>
          <ArrowDown aria-label="Scroll down"><Tri d="M0 2h9L4.500 6z" c="#35547f" /></ArrowDown>
        </VScroll>
      </SheetArea>

      <BottomStrip>
        <SheetNav>
          <IconButton aria-label="First sheet"><Tri d="M1 0h1v8H1zM7 0v8L3 4z" /></IconButton>
          <IconButton aria-label="Previous sheet"><Tri d="M6 0v8L2 4z" /></IconButton>
          <IconButton aria-label="Next sheet"><Tri d="M3 0v8l4-4z" /></IconButton>
          <IconButton aria-label="Last sheet"><Tri d="M7 0h1v8H7zM2 0v8l4-4z" /></IconButton>
        </SheetNav>
        <SheetTab>Summary</SheetTab>
        <NewSheet aria-label="Insert sheet">
          <svg width="40" height="15" viewBox="0 0 40 15"><path d="M0 0h11L0 14z" fill="#fff" /><path d="M11 0h28L27 14H-1z" fill="#c9dcf5" stroke="#7a9bc9" /><rect x="13.500" y="4.500" width="9" height="7" fill="#fff" stroke="#5f7ba5" /><circle cx="13" cy="4" r="2.500" fill="#f3a53a" /></svg>
        </NewSheet>
        <HScroll>
          <HSplit />
          <HButton aria-label="Scroll left"><Tri d="M6 0v8L2 4z" c="#2b3d5c" /></HButton>
          <HTrack><HThumb><svg width="8" height="7" stroke="#6a86b2"><path d="M.5 0v7M3.500 0v7M6.500 0v7" /></svg></HThumb></HTrack>
          <HButton aria-label="Scroll right"><Tri d="M3 0v8l4-4z" c="#2b3d5c" /></HButton>
          <HSplit />
          <VScroll />
        </HScroll>
      </BottomStrip>

      <StatusBar>
        <Ready>Ready</Ready>
        <StatusTools>
          <ViewButtons>
            <ViewButton $on aria-label="Normal"><ViewIcon kind={0} /></ViewButton>
            <ViewButton aria-label="Page layout"><ViewIcon kind={1} /></ViewButton>
            <ViewButton aria-label="Page break"><ViewIcon kind={2} /></ViewButton>
          </ViewButtons>
          <ZoomLabel>100%</ZoomLabel>
          <IconButton aria-label="Zoom out"><ZoomGlyph /></IconButton>
          <Slider type="range" aria-label="Zoom" defaultValue={50} />
          <IconButton aria-label="Zoom in"><ZoomGlyph plus /></IconButton>
        </StatusTools>
      </StatusBar>

      <Taskbar>
        <Start aria-label="Start"><svg width="16" height="16" viewBox="0 0 16 16" fill="#fff"><path d="M0 2.200l6.500-1v6.300H0zM7.500 1L16 0v7.500H7.500zM0 8.500h6.500v6.300l-6.500-1zM7.500 8.500H16V16l-8.500-1.200z" /></svg></Start>
        <SearchBox>
          <svg width="16" height="16" viewBox="0 0 16 16" fill="none" stroke="#222" strokeWidth="1.300"><circle cx="10" cy="6" r="5" /><path d="M6.500 9.500L.5 15.500" /></svg>
          <input aria-label="Search" placeholder="Type here to search" />
        </SearchBox>
        <AppButton aria-label="Cortana"><svg width="16" height="16"><circle cx="8" cy="8" r="6.500" fill="none" stroke="#fff" strokeWidth="2" /></svg></AppButton>
        <AppButton aria-label="Task view"><svg width="16" height="15" viewBox="0 0 16 15" fill="none" stroke="#fff"><path d="M.5 0v2.500h10V0M.5 5.500h10v5H.5zM.5 15v-2h10v2M13.500 0v15" /><rect x="12.500" y="4.500" width="2" height="2" fill="#fff" /></svg></AppButton>
        <AppButton $run aria-label="Calculator"><svg width="18" height="22" viewBox="0 0 18 22"><rect width="18" height="22" rx="1" fill="#7c8a94" /><rect x="2" y="2" width="14" height="4" fill="#45c3ea" /><path d="M2 8h4v3H2zM7 8h4v3H7zM12 8h4v3h-4zM2 12h4v3H2zM7 12h4v3H7zM2 16h4v4H2zM7 16h4v4H7z" fill="#e4e9ec" /><path d="M12 12h4v8h-4z" fill="#17447e" /></svg></AppButton>
        <AppButton $run aria-label="File Explorer"><svg width="21" height="18" viewBox="0 0 21 18"><path d="M0 1h8l2 2h10v4H0z" fill="#e1a12a" /><path d="M0 5h21v12H0z" fill="#fcd462" /><path d="M4 17v-7h13v7h-3v-4H7v4z" fill="#3f8fcd" /></svg></AppButton>
        <AppButton aria-label="Edge">
          <svg width="23" height="23" viewBox="0 0 23 23">
            <defs><linearGradient id="edgeTop" x1="0" x2="1"><stop offset="0" stopColor="#229bdc" /><stop offset="1" stopColor="#61d67a" /></linearGradient></defs>
            <circle cx="11.500" cy="11.500" r="11" fill="#1878cb" />
            <path d="M.5 11C1 4 6 .5 11.500.500S22.500 5 22.500 10c0 4-3 6-6 6-2 0-4-1-3-2.500 2-3-1-6-5-6S1 9 .5 11z" fill="url(#edgeTop)" />
            <path d="M8 11c-1 5 4 9 11 7.500-4 4-11 3-13-1.500-1-3 0-5 2-6z" fill="#0d4a91" />
            <path d="M11 10c1 1 1.500 2 0 4-.5 2 3 4 8 3l4-3-4-1c-2 2-5 2-5 0z" fill="#1c3440" />
          </svg>
        </AppButton>
        <AppButton aria-label="Tiles"><svg width="23" height="23"><path d="M0 0h23v12H0z" fill="#2965b3" /><path d="M0 12h12v11H0z" fill="#fcc32d" /><path d="M12 12h11v11H12z" fill="#5d9fdb" /></svg></AppButton>
        <AppButton $run aria-label="Chrome">
          <svg width="24" height="24" viewBox="0 0 24 24">
            <circle cx="11" cy="11" r="10.500" fill="#f3c62b" /><path d="M2 5.500A10.500 10.500 0 0 1 20.500 6H11l-4.500 8z" fill="#dd4b3e" /><path d="M2 5.500l5 8.500 4 2-2.500 5.500A10.500 10.500 0 0 1 2 5.500z" fill="#2e9d54" />
            <circle cx="11" cy="11" r="5" fill="#fff" /><circle cx="11" cy="11" r="4" fill="#4080ec" /><circle cx="17" cy="17" r="6.500" fill="#4b5a62" />
            <text x="14.500" y="20" fontSize="8" fontWeight="700" fontFamily="Liberation Sans" fill="#fff">S</text>
          </svg>
        </AppButton>
        <AppButton $run $on aria-label="Excel"><svg width="22" height="22" viewBox="0 0 22 22"><path d="M4 1h15l-2 8H1z" fill="#eaf5e4" stroke="#7fb55c" /><path d="M8 6.500h13l-1 13.500-13-1z" fill="#fff" stroke="#5f9e42" /><path d="M3 5l9-1-1 12-10 1z" fill="#f4faf0" stroke="#b9dba2" /><path d="M12 11h9M8 15.500h12M14.500 6.500l-1 13M18 6.500l-1 13" stroke="#7fb55c" strokeWidth="1.500" /><path d="M4.500 6l6 8M11 6l-7 8" stroke="#2c6a22" strokeWidth="2.300" /></svg></AppButton>
        <AppButton $run aria-label="Globe"><svg width="16" height="17" viewBox="0 0 16 17"><circle cx="8" cy="9" r="7" fill="#3aa5dd" /><path d="M2 8l4 1 2-3 3 3 3-1-2 4 1 2-4-1-3 2-1-4z" fill="#d7e35c" /><circle cx="4" cy="5" r="2.500" fill="#9bdcf6" /><circle cx="12" cy="5" r="2.500" fill="#9bdcf6" /><circle cx="8" cy="3.500" r="2.500" fill="#2f8fd2" /></svg></AppButton>
        <AppButton $run aria-label="Nation Tax Market">
          <svg width="23" height="23" viewBox="0 0 23 23" fontFamily="Liberation Sans" fontWeight="700" fill="#c8261c"><rect width="23" height="23" fill="#d9e035" /><path d="M1 17l3-8 4-6-1 8-3 9z" fill="#e2482b" /><path d="M2 15l3 3 5-6" stroke="#fff" strokeWidth="2" fill="none" /><text x="7" y="7" fontSize="4">NATION</text><text x="10" y="14" fontSize="5">TAX</text><text x="6" y="21" fontSize="4">MARKET</text></svg>
        </AppButton>
        <Tray>
          <TrayButton $w={22} aria-label="Hidden icons"><svg width="11" height="7" fill="none" stroke="#fff" strokeWidth="1.300"><path d="M.5 6l5-5 5 5" /></svg></TrayButton>
          <TrayButton $w={22} aria-label="Volume"><svg width="16" height="14" viewBox="0 0 16 14" fill="none" stroke="#fff"><path d="M.5 5v4H3l3.500 3.500v-11L3 5zM8.500 5q1 2 0 4M10.500 3q2.500 4 0 8M12.500 1q4 6 0 12" /></svg></TrayButton>
          <Lang>ENG</Lang>
          <Clock>21:41<br />29/04/2021</Clock>
          <TrayButton $w={50} aria-label="Notifications"><svg width="17" height="17" viewBox="0 0 17 17"><path d="M1 1h14v10H8l-3 3v-3H1z" fill="#fff" /><path d="M3 4h10M3 6.500h10M3 9h6" stroke="#24313d" /><circle cx="12.500" cy="12.500" r="3.500" fill="#1c2a38" stroke="#fff" /><path d="M13.500 10.500c-2 1-2 3 0 4" stroke="#fff" fill="none" /></svg></TrayButton>
        </Tray>
      </Taskbar>

      <OfficeButton aria-label="Office menu"><OfficeLogo /></OfficeButton>
      <Brand>TAX MITRA</Brand>
      <Pointer width="13" height="22" viewBox="0 0 13 22"><path d="M1 1v16l4-3.500 3 7 3-1.500-3-6.500h5z" fill="#fff" stroke="#222" /></Pointer>
    </Desktop>
  );
}
